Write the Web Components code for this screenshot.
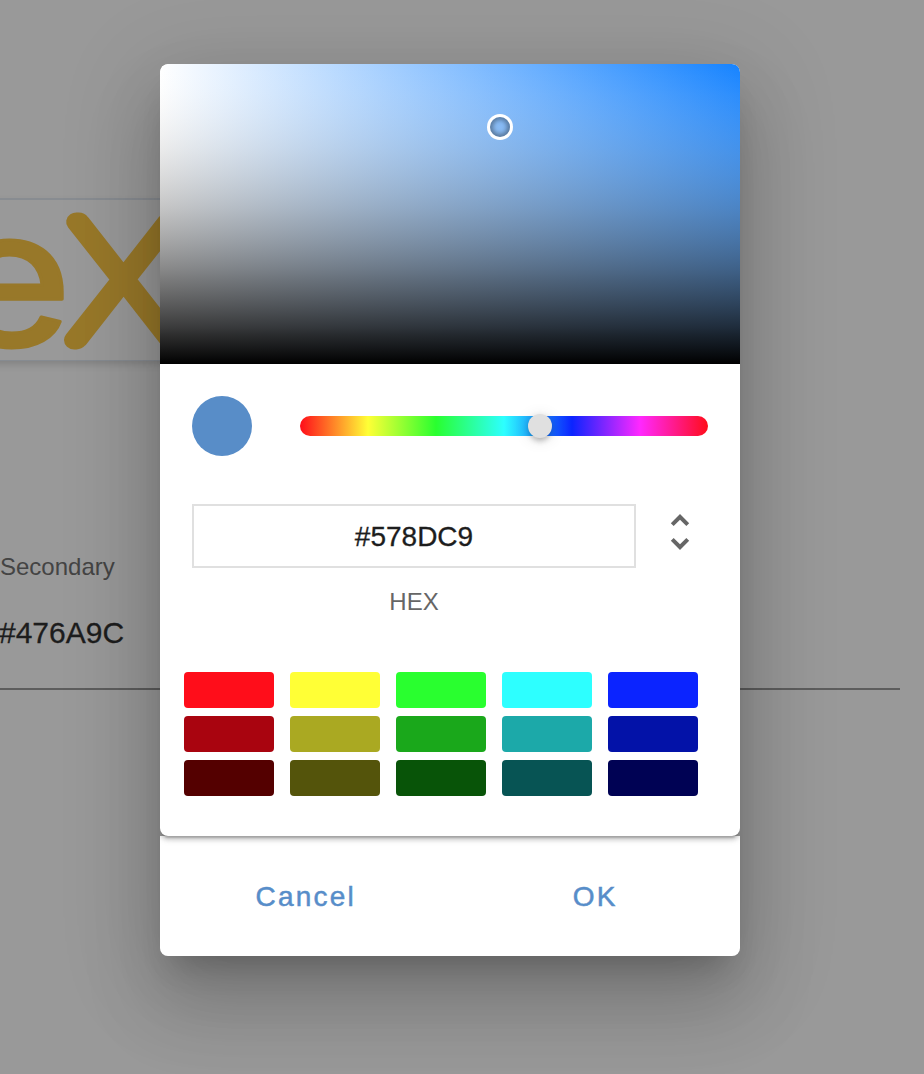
<!DOCTYPE html>
<html lang="en">
<head>
<meta charset="utf-8">
<title>Color picker</title>
<style>
html,body{margin:0;height:100%;overflow:hidden;background:#999;font-family:"Liberation Sans",Arial,sans-serif}
</style>
</head>
<body>
<color-settings></color-settings>
<script>
const define = (name, html, setup) => customElements.define(name, class extends HTMLElement {
  constructor() {
    super();
    const t = document.createElement('template');
    t.innerHTML = html;
    this.attachShadow({mode: 'open'}).append(t.content.cloneNode(true));
  }
  connectedCallback() { if (setup) setup(this, this.shadowRoot); }
});

define('brand-card', `
<style>
:host{display:block;box-sizing:border-box;width:420px;height:163px;margin-left:-20px;padding-left:20px;border-top:2px solid #888c91;border-bottom:1px solid #868b91;box-shadow:0 4px 8px -1px rgba(0,0,0,.16);overflow:hidden}
svg{display:block}
text{fill:#987829;stroke:#987829;stroke-linejoin:round}
.e{font-family:Inter,sans-serif}
.x{font-family:Lato,sans-serif}
</style>
<svg width="240" height="160" viewBox="0 200 240 160">
<text class="e" transform="translate(-56 345.5) scale(1.15 1)" font-size="192" font-weight="400" stroke-width="3">e</text>
<text class="x" transform="translate(69 339.5) scale(1.08 1)" font-size="168" font-weight="100" stroke-width="19">X</text>
</svg>`);

define('color-field', `
<style>
:host{display:block;box-sizing:border-box;height:139px;width:900px;border-bottom:2px solid #5d5d5d;white-space:nowrap}
.label{font-size:24px;line-height:32px;color:#444}
.value{font-size:30px;line-height:40px;margin:30px 0 0 -1px;color:#1d1d1d;-webkit-text-stroke:.3px #1d1d1d}
</style>
<div class="label"><slot name="label"></slot></div><div class="value"><slot></slot></div>`);

define('shade-canvas', `
<style>
:host{display:block;position:relative;height:300px;overflow:hidden}
i{position:absolute;left:330px;top:53px;width:20px;height:20px;border-radius:50%;box-shadow:0 0 0 3px #fff,inset 0 0 4px 3px rgba(0,0,0,.34)}
</style><i></i>`, el => {
  // The value ramp goes from transparent white to black with straight alpha.
  const stops = [];
  for (let n = 0; n <= 50; n++) {
    const s = n / 50, c = Math.round(255 * (1 - s));
    stops.push(`rgba(${c},${c},${c},${s}) ${s * 100}%`);
  }
  el.style.background = `linear-gradient(to bottom,${stops}),linear-gradient(to right,#fff,#1683ff)`;
});

define('hue-slider', `
<style>
:host{display:block;position:relative;height:20px;border-radius:10px;background:linear-gradient(to right,#ff0d1a 0%,#ffff36 16.66%,#29ff2f 33.33%,#2dffff 50%,#0b24ff 66.66%,#ff28ff 83.33%,#ff0d1a 100%)}
i{position:absolute;left:228px;top:-2px;width:24px;height:24px;border-radius:50%;background:#e0e0e0;box-shadow:0 6px 6px -4px rgba(0,0,0,.2),0 2px 6px rgba(0,0,0,.14),0 2px 16px rgba(0,0,0,.12)}
</style><i></i>`);

define('hex-input', `
<style>
:host{display:flex;justify-content:space-between;align-items:flex-start}
.col{width:444px;text-align:center}
.box{box-sizing:border-box;height:64px;border:2px solid #e0e0e0;font-size:28px;line-height:62px;color:#1d1d1d;-webkit-text-stroke:.3px #1d1d1d}
.cap{font-size:24px;line-height:32px;margin-top:18px;color:#666}
svg{width:48px;height:48px;margin:4px 4px 0 0;fill:#666}
</style>
<div class="col"><div class="box"><slot></slot></div><div class="cap"><slot name="format"></slot></div></div>
<svg viewBox="0 0 24 24"><path d="M12 18.17 8.83 15 7.42 16.41 12 21l4.59-4.59L15.17 15M12 5.83 15.17 9l1.41-1.41L12 3 7.41 7.59 8.83 9z"/></svg>`);

define('swatch-grid', `
<style>
:host{display:grid;grid-template-columns:repeat(5,90px);grid-auto-rows:36px;gap:8px 16px}
i{border-radius:4px}
</style>`, (el, root) => {
  for (const c of el.getAttribute('colors').split(' ')) {
    const i = document.createElement('i');
    i.style.background = c;
    root.append(i);
  }
});

define('text-button', `
<style>
:host{display:block;font-size:28px;line-height:36px;letter-spacing:2.2px;color:#578dc9;-webkit-text-stroke:.5px #578dc9}
</style><slot></slot>`);

define('picker-dialog', `
<style>
:host{display:block;width:580px;height:892px;border-radius:8px;box-shadow:0 22px 30px -14px rgba(0,0,0,.2),0 48px 76px 6px rgba(0,0,0,.14),0 18px 92px 16px rgba(0,0,0,.12)}
.clip{height:100%;border-radius:8px;overflow:hidden}
.sheet{position:relative;box-sizing:border-box;height:772px;border-radius:8px;background:#fff;box-shadow:0 6px 2px -4px rgba(0,0,0,.2),0 4px 4px rgba(0,0,0,.14),0 2px 10px rgba(0,0,0,.12)}
shade-canvas{border-radius:8px 8px 0 0}
.row{display:flex;align-items:center;gap:48px;padding:32px 32px 48px}
.dot{width:60px;height:60px;border-radius:50%;background:#588dc8}
hue-slider{flex:1}
hex-input{height:168px;padding:0 32px}
swatch-grid{padding-left:24px}
.actions{display:flex;height:120px;box-sizing:border-box;background:#fff;padding:1px 0 0 1px}
.actions div{flex:1;display:flex;align-items:center;justify-content:center}
</style>
<div class="clip">
<div class="sheet">
<shade-canvas></shade-canvas>
<div class="row"><div class="dot"></div><hue-slider></hue-slider></div>
<hex-input>#578DC9<span slot="format">HEX</span></hex-input>
<swatch-grid colors="#ff0d1a #ffff36 #29ff2f #2dffff #0b24ff #a9040f #aaa922 #1aa81b #1ca9a9 #0312a8 #540000 #54540b #085408 #075454 #000254"></swatch-grid>
</div>
<div class="actions"><div><text-button>Cancel</text-button></div><div><text-button>OK</text-button></div></div>
</div>`);

define('color-settings', `
<style>
:host{display:block;position:relative;width:924px;height:1074px;overflow:hidden;background:#999}
.page{padding-top:198px}
color-field{margin-top:190px}
picker-dialog{position:absolute;left:160px;top:64px}
</style>
<div class="page">
<brand-card></brand-card>
<color-field><span slot="label">Secondary</span>#476A9C</color-field>
</div>
<picker-dialog></picker-dialog>`);
</script>
</body>
</html>
